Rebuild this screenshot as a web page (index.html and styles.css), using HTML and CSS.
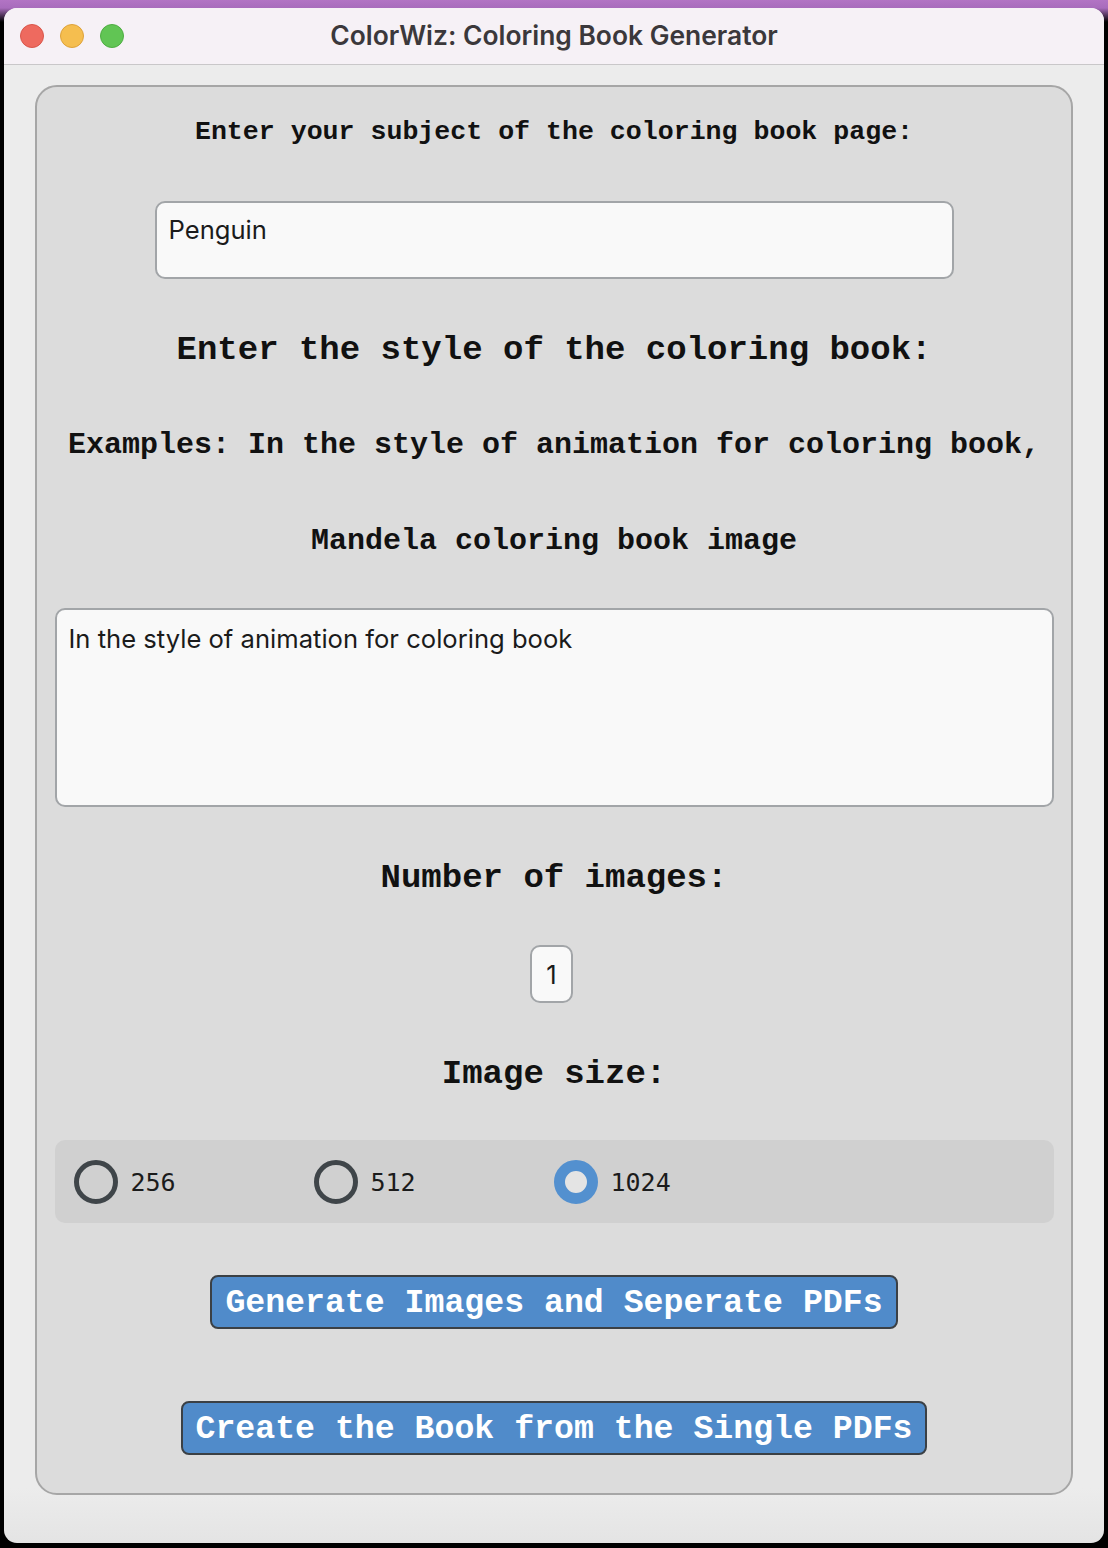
FILE: index.html
```html
<!DOCTYPE html>
<html>
<head>
<meta charset="utf-8">
<title>ColorWiz</title>
<link rel="stylesheet" href="styles.css">
</head>
<body>
<div class="window">
  <div class="titlebar">
    <div class="lights">
      <span class="light red"></span>
      <span class="light yellow"></span>
      <span class="light green"></span>
    </div>
    <div class="title">ColorWiz: Coloring Book Generator</div>
  </div>
  <div class="content">
    <div class="frame">
      <div class="label small l1">Enter your subject of the coloring book page:</div>
      <div class="entry subject">Penguin</div>
      <div class="label big l2">Enter the style of the coloring book:</div>
      <div class="label mid l3">Examples: In the style of animation for coloring book,</div>
      <div class="label mid l4">Mandela coloring book image</div>
      <div class="entry textbox">In the style of animation for coloring book</div>
      <div class="label big l5">Number of images:</div>
      <div class="entry num">1</div>
      <div class="label big l6">Image size:</div>
      <div class="radios">
        <div class="radio"><span class="dot"></span><span class="rlabel">256</span></div>
        <div class="radio"><span class="dot"></span><span class="rlabel">512</span></div>
        <div class="radio"><span class="dot on"></span><span class="rlabel">1024</span></div>
      </div>
      <div class="btn b1">Generate Images and Seperate PDFs</div>
      <div class="btn b2">Create the Book from the Single PDFs</div>
    </div>
  </div>
</div>
</body>
</html>
```

FILE: styles.css
```css
html, body {
  margin: 0;
  padding: 0;
}
body {
  width: 1108px;
  height: 1548px;
  overflow: hidden;
  background: linear-gradient(#b274c4 0, #a86cbc 8px, #000 22px, #000 100%);
  padding-top: 8px;
  box-sizing: border-box;
}
.window {
  margin-left: 4px;
  width: 1100px;
  height: 1535px;
  border-radius: 13px;
  background: linear-gradient(#ececec 0, #ececec 1480px, #e4e4e4 100%);
  overflow: hidden;
  display: flex;
  flex-direction: column;
}
.titlebar {
  height: 56px;
  flex: none;
  background: #f6f1f6;
  border-bottom: 1px solid #c9c7c9;
  display: flex;
  align-items: center;
  position: relative;
}
.lights {
  display: flex;
  gap: 16px;
  margin-left: 16px;
}
.light {
  width: 24px;
  height: 24px;
  border-radius: 50%;
  box-sizing: border-box;
}
.red { background: #ee6a5f; border: 1px solid #d9564b; }
.yellow { background: #f5be4f; border: 1px solid #dea23a; }
.green { background: #61c554; border: 1px solid #4ead42; }
.title {
  position: absolute;
  left: 0;
  right: 0;
  text-align: center;
  font-family: "Inter", "Open Sans", sans-serif;
  font-weight: 600;
  font-size: 26.4px;
  color: #3b383b;
  top: 12px;
  line-height: 30px;
}
.content {
  padding: 20px 31px 0 31px;
}
.frame {
  box-sizing: border-box;
  width: 1038px;
  height: 1410px;
  border: 2px solid #a6a6a6;
  border-radius: 22px;
  background: #dcdcdc;
  display: flex;
  flex-direction: column;
  align-items: center;
}
.label {
  font-family: "Liberation Mono", "Courier New", monospace;
  font-weight: bold;
  color: #111;
  line-height: 40px;
  height: 40px;
  padding-top: 2px;
  white-space: nowrap;
}
.small { font-size: 26.6px; }
.big { font-size: 34px; }
.mid { font-size: 30px; }
.l1 { margin-top: 23px; }
.l2 { margin-top: 49px; }
.l3 { margin-top: 53px; }
.l4 { margin-top: 54px; }
.l5 { margin-top: 49px; }
.l6 { margin-top: 49px; }
.entry {
  box-sizing: border-box;
  background: #f9f9f9;
  border: 2px solid #a2a5a8;
  border-radius: 10px;
  font-family: "Inter", "Open Sans", sans-serif;
  font-size: 25.6px;
  color: #1b1b1b;
}
.subject {
  margin-top: 49px;
  width: 799px;
  height: 78px;
  padding: 13px 12px;
  line-height: 28px;
}
.textbox {
  margin-top: 47px;
  width: 999px;
  height: 199px;
  padding: 15px 12px;
  line-height: 28px;
}
.num {
  margin-top: 47px;
  margin-right: 5px;
  width: 43px;
  height: 58px;
  line-height: 56px;
  text-align: center;
}
.radios {
  margin-top: 46px;
  width: 999px;
  height: 83px;
  box-sizing: border-box;
  background: #d0d0d0;
  border-radius: 10px;
  display: flex;
  align-items: center;
  padding-left: 19px;
}
.radio {
  width: 240px;
  display: flex;
  align-items: center;
  gap: 13px;
}
.dot {
  width: 44px;
  height: 44px;
  box-sizing: border-box;
  border-radius: 50%;
  border: 5px solid #3f4549;
}
.dot.on {
  border: 11.5px solid #5390cf;
  background: #e4e4e4;
}
.rlabel {
  font-family: "DejaVu Sans Mono", monospace;
  font-size: 25px;
  line-height: 30px;
  padding-top: 3px;
  color: #1b1b1b;
}
.btn {
  box-sizing: border-box;
  height: 54px;
  border: 2px solid #3b4045;
  border-radius: 8px;
  background: #508bca;
  color: #fff;
  font-family: "Liberation Mono", "Courier New", monospace;
  font-weight: bold;
  font-size: 33.2px;
  line-height: 52px;
  padding: 0 13px;
  white-space: nowrap;
}
.b1 { margin-top: 52px; }
.b2 { margin-top: 72px; }
```
